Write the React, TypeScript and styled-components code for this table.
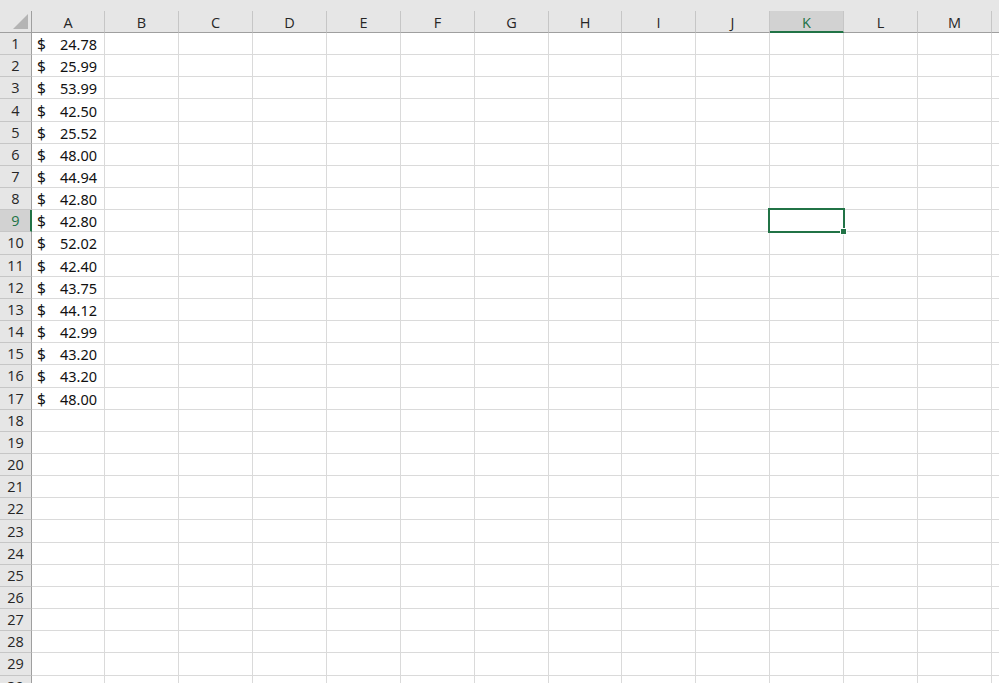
import React from "react";
import styled, { createGlobalStyle, css } from "styled-components";

const GlobalStyle = createGlobalStyle`
  html, body { margin: 0; padding: 0; background: #ffffff; overflow: hidden; }
  body { width: 999px; height: 683px; font-family: "Noto Sans", "Open Sans", sans-serif; }
`;

const GREEN = "#217346";
const HEADER_BG = "#e6e6e6";
const HEADER_ACTIVE = "#d2d2d2";
const HEADER_LINE = "#9f9f9f";
const HEADER_SEP = "#c6c6c6";
const GRID = "#dadada";

const Page = styled.div`
  width: 999px;
  height: 683px;
  overflow: hidden;
  display: flex;
  flex-direction: column;
`;

const TopBand = styled.div`
  height: 11px;
  flex: none;
  background: ${HEADER_BG};
`;

const Grid = styled.div`
  display: grid;
  grid-template-columns: 32px 73px repeat(6, 74px) 73px repeat(5, 74px) 1fr;
  grid-template-rows: 22px;
  grid-auto-rows: 22.17px;
`;

const Corner = styled.div`
  background: ${HEADER_BG};
  border-right: 1px solid ${HEADER_LINE};
  border-bottom: 1px solid ${HEADER_LINE};
  display: flex;
  align-items: flex-end;
  justify-content: flex-end;
  padding: 0 3px 3px 0;
`;

const Triangle = styled.div`
  width: 0;
  height: 0;
  border-style: solid;
  border-width: 0 0 15px 15px;
  border-color: transparent transparent #b4b4b4 transparent;
`;

const headerText = css`
  font-family: "Open Sans", "Noto Sans", sans-serif;
  font-size: 14.5px;
  color: #262626;
`;

const ColHeader = styled.div<{ $active?: boolean }>`
  box-sizing: border-box;
  background: ${HEADER_BG};
  border-right: 1px solid ${HEADER_SEP};
  border-bottom: 1px solid ${HEADER_LINE};
  display: flex;
  align-items: center;
  justify-content: center;
  padding-top: 1px;
  ${headerText}
  ${(p) =>
    p.$active &&
    css`
      background: ${HEADER_ACTIVE};
      border-bottom: 2px solid ${GREEN};
      color: ${GREEN};
      padding-top: 2px;
    `}
`;

const RowHeader = styled.div<{ $active?: boolean }>`
  box-sizing: border-box;
  background: ${HEADER_BG};
  border-right: 1px solid ${HEADER_LINE};
  border-bottom: 1px solid ${HEADER_SEP};
  display: flex;
  align-items: center;
  justify-content: center;
  ${headerText}
  ${(p) =>
    p.$active &&
    css`
      background: ${HEADER_ACTIVE};
      border-right: 2px solid ${GREEN};
      color: ${GREEN};
      padding-left: 1px;
    `}
`;

const Cell = styled.div`
  position: relative;
  box-sizing: border-box;
  border-right: 1px solid ${GRID};
  border-bottom: 1px solid ${GRID};
  display: flex;
  align-items: center;
  justify-content: space-between;
  padding: 1px 7px 0 5px;
  font-size: 14.5px;
  color: #111111;
  white-space: nowrap;
  min-width: 0;
`;

const Dollar = styled.span`
  font-size: 15.5px;
`;

const Selection = styled.div`
  position: absolute;
  left: -2px;
  top: -2px;
  right: -2px;
  bottom: -2px;
  border: 2px solid ${GREEN};
  pointer-events: none;
  z-index: 2;
`;

const FillHandle = styled.div`
  position: absolute;
  right: -4px;
  bottom: -4px;
  width: 5px;
  height: 5px;
  background: ${GREEN};
  border: 1px solid #ffffff;
`;

const columns = ["A", "B", "C", "D", "E", "F", "G", "H", "I", "J", "K", "L", "M", ""];
const values = [
  "24.78", "25.99", "53.99", "42.50", "25.52", "48.00", "44.94", "42.80", "42.80",
  "52.02", "42.40", "43.75", "44.12", "42.99", "43.20", "43.20", "48.00",
];
const ROWS = 30;
const ACTIVE_COL = 10;
const ACTIVE_ROW = 9;

export default function App() {
  return (
    <Page>
      <GlobalStyle />
      <TopBand />
      <Grid>
        <Corner>
          <Triangle />
        </Corner>
        {columns.map((c, i) => (
          <ColHeader key={"h" + i} $active={i === ACTIVE_COL}>
            {c}
          </ColHeader>
        ))}
        {Array.from({ length: ROWS }, (_, r) => {
          const row = r + 1;
          return (
            <React.Fragment key={row}>
              <RowHeader $active={row === ACTIVE_ROW}>{row}</RowHeader>
              {columns.map((_, ci) => {
                const v = ci === 0 ? values[r] : undefined;
                const selected = row === ACTIVE_ROW && ci === ACTIVE_COL;
                return (
                  <Cell key={ci}>
                    {v && (
                      <>
                        <Dollar>$</Dollar>
                        <span>{v}</span>
                      </>
                    )}
                    {selected && (
                      <Selection>
                        <FillHandle />
                      </Selection>
                    )}
                  </Cell>
                );
              })}
            </React.Fragment>
          );
        })}
      </Grid>
    </Page>
  );
}
